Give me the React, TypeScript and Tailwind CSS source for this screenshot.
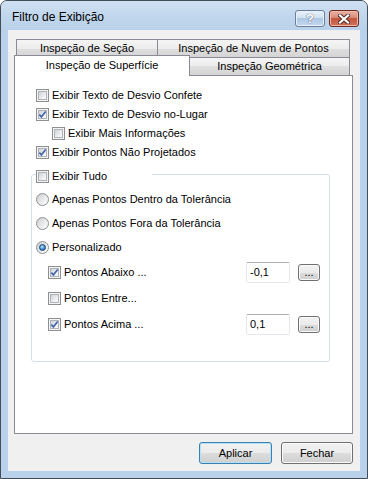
import React from 'react';

const BTN_BG =
  'bg-[linear-gradient(to_bottom,#f2f2f2_0%,#ebebeb_50%,#dddddd_50%,#cfcfcf_100%)]';
const TAB_BG =
  'bg-[linear-gradient(to_bottom,#f5f5f5_0%,#ececec_50%,#dfdfdf_50%,#d4d4d4_100%)]';

function Check({ checked = false }: { checked?: boolean }) {
  return (
    <span className="relative block w-[13px] h-[13px] shrink-0 border border-[#8e8f8f] bg-[#f4f4f4] p-[1px]">
      <span className="block w-full h-full border border-[#aeb3b9] bg-[linear-gradient(135deg,#cfd3d8_0%,#eceef0_60%,#fbfbfb_100%)]" />
      {checked && (
        <svg className="absolute left-0 top-0" width="11" height="11" viewBox="0 0 11 11">
          <path d="M2.3 5.6 L4.4 7.9 L8.7 2.5" fill="none" stroke="#4868ad" strokeWidth="1.7" />
        </svg>
      )}
    </span>
  );
}

function Radio({ checked = false }: { checked?: boolean }) {
  return (
    <span className="relative block w-[13px] h-[13px] shrink-0 rounded-full border border-[#8e8f8f] bg-[linear-gradient(135deg,#c9cdd2_0%,#eceef0_60%,#fdfdfd_100%)]">
      {checked && (
        <span className="absolute left-[2px] top-[2px] w-[7px] h-[7px] rounded-full border border-[#1c4270] bg-[radial-gradient(circle_at_40%_35%,#b6e6ff_0%,#3f8fd6_55%,#1d548f_100%)]" />
      )}
    </span>
  );
}

function CheckRow({ label, checked, indent }: { label: string; checked?: boolean; indent?: boolean }) {
  return (
    <div className={`flex items-center h-[19px] gap-[3px] ${indent ? 'pl-[16px]' : ''}`}>
      <Check checked={checked} />
      <span>{label}</span>
    </div>
  );
}

function RadioRow({ label, checked }: { label: string; checked?: boolean }) {
  return (
    <div className="flex items-center h-[24px] gap-[3px]">
      <Radio checked={checked} />
      <span>{label}</span>
    </div>
  );
}

function ValueRow({ label, checked, value }: { label: string; checked?: boolean; value?: string }) {
  return (
    <div className="flex items-center h-[26px] pl-[12px]">
      <Check checked={checked} />
      <span className="ml-[3px]">{label}</span>
      {value !== undefined && (
        <>
          <div className="ml-auto w-[44px] h-[21px] flex items-center pl-[3px] bg-white border border-[#e3e9ef] border-t-[#abadb3] rounded-[2px]">
            {value}
          </div>
          <button className={`ml-[8px] w-[22px] h-[17px] flex items-end justify-center pb-[2px] leading-none border border-[#707070] rounded-[3px] ${BTN_BG} shadow-[inset_0_0_0_1px_#fbfbfb]`}>
            ...
          </button>
        </>
      )}
    </div>
  );
}

export default function App() {
  return (
    <div className="w-[368px] h-[479px] font-['Liberation_Sans',Arial,sans-serif] text-[11px] text-black">
      <div className="w-full h-full flex flex-col border border-[#434b55] rounded-t-[7px] bg-[#b9d1ea] overflow-hidden">
        {/* barra de titulo */}
        <div className="h-[29px] flex items-start bg-[linear-gradient(to_bottom,#d0e0f2_0%,#bfd5ec_60%,#b9d1ea_100%)]">
          <span className="pl-[11px] pt-[9px] text-[12px] leading-[15px]">Filtro de Exibição</span>
          <div className="ml-auto mr-[8px] mt-[9px] flex gap-[4px]">
            <div className="w-[30px] h-[17px] flex items-center justify-center rounded-[3px] border border-[#6b7f9a] bg-[linear-gradient(to_bottom,#eaf2fa_0%,#cfdff0_50%,#aec7e3_50%,#c3d8ef_100%)] shadow-[inset_0_0_0_1px_#e8f1fb]">
              <span className="text-white font-bold text-[13px] leading-none [text-shadow:0_0_1px_#52647c,0_0_1px_#52647c]">?</span>
            </div>
            <div className="w-[30px] h-[17px] flex items-center justify-center rounded-[3px] border border-[#6d2b20] bg-[linear-gradient(to_bottom,#eab3a6_0%,#d98a78_45%,#c6553e_50%,#d27058_100%)] shadow-[inset_0_0_0_1px_#eeb8ab]">
              <svg width="12" height="10" viewBox="0 0 12 10">
                <path d="M2 1.5 L10 8.5 M10 1.5 L2 8.5" stroke="#4a2a24" strokeWidth="4" strokeLinecap="square" />
                <path d="M2 1.5 L10 8.5 M10 1.5 L2 8.5" stroke="#ffffff" strokeWidth="2.2" strokeLinecap="square" />
              </svg>
            </div>
          </div>
        </div>

        {/* area do cliente */}
        <div className="flex-1 mx-[7px] mb-[7px] bg-[#f0f0f0] flex flex-col">
          {/* abas */}
          <div className="pt-[9px]">
            <div className="flex ml-[8px] h-[18px]">
              <div className={`w-[142px] h-full flex items-center justify-center border border-b-0 border-[#898c95] ${TAB_BG}`}>
                Inspeção de Seção
              </div>
              <div className={`-ml-px w-[193px] h-full flex items-center justify-center border border-b-0 border-[#898c95] ${TAB_BG}`}>
                Inspeção de Nuvem de Pontos
              </div>
            </div>
            <div className="flex items-end ml-[6px] h-[20px] -mt-[2px]">
              <div className="relative z-10 w-[176px] h-[21px] -mb-px flex items-center justify-center pb-[1px] border border-b-0 border-[#898c95] bg-white">
                Inspeção de Superfície
              </div>
              <div className={`-ml-px w-[161px] h-[18px] flex items-center justify-center border border-b-0 border-[#898c95] ${TAB_BG}`}>
                Inspeção Geométrica
              </div>
            </div>
          </div>

          {/* painel */}
          <div className="ml-[6px] w-[339px] h-[359px] border border-[#898c95] bg-white pl-[16px] pt-[10px]">
            <div className="flex flex-col pl-[5px]">
              <CheckRow label="Exibir Texto de Desvio Confete" />
              <CheckRow label="Exibir Texto de Desvio no-Lugar" checked />
              <CheckRow label="Exibir Mais Informações" indent />
              <CheckRow label="Exibir Pontos Não Projetados" checked />
            </div>

            <fieldset className="mt-[3px] w-[299px] border border-[#d5dfe5] rounded-[3px] pl-[4px] pr-[9px] pt-[3px] pb-[24px]">
              <legend className="w-[116px]">
                <div className="relative top-[2px] flex items-center h-[19px] gap-[3px]">
                  <Check />
                  <span>Exibir Tudo</span>
                </div>
              </legend>
              <RadioRow label="Apenas Pontos Dentro da Tolerância" />
              <RadioRow label="Apenas Pontos Fora da Tolerância" />
              <RadioRow label="Personalizado" checked />
              <ValueRow label="Pontos Abaixo ..." checked value="-0,1" />
              <ValueRow label="Pontos Entre..." />
              <ValueRow label="Pontos Acima ..." checked value="0,1" />
            </fieldset>
          </div>

          {/* botoes */}
          <div className="flex justify-end gap-[9px] mt-[8px] mr-[7px]">
            <button className={`w-[73px] h-[22px] rounded-[3px] border border-[#3c7fb1] ${BTN_BG} shadow-[inset_0_0_0_1px_#b3e2f8]`}>
              Aplicar
            </button>
            <button className={`w-[72px] h-[22px] rounded-[3px] border border-[#707070] ${BTN_BG} shadow-[inset_0_0_0_1px_#fbfbfb]`}>
              Fechar
            </button>
          </div>
        </div>
      </div>
    </div>
  );
}
